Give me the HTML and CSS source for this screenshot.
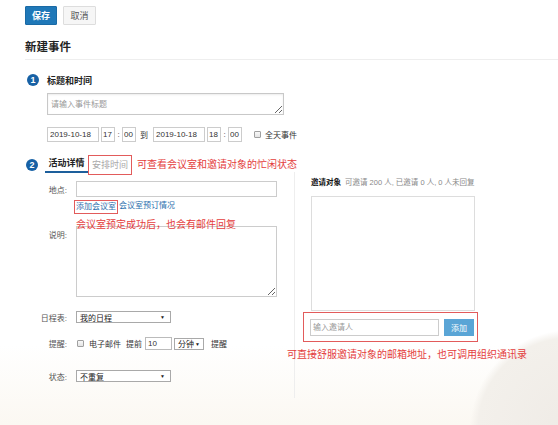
FILE: index.html
```html
<!DOCTYPE html>
<html lang="zh-CN">
<head>
<meta charset="utf-8">
<title>新建事件</title>
<link rel="stylesheet" href="styles.css">
</head>
<body>
<div class="page">
  <div class="toolbar">
    <button class="btn btn-primary">保存</button>
    <button class="btn btn-default">取消</button>
  </div>
  <h1 class="title">新建事件</h1>

  <section class="sec1">
    <div class="sec-head">
      <span class="num">1</span>
      <span class="sec-title">标题和时间</span>
    </div>
    <textarea class="title-input" placeholder="请输入事件标题"></textarea>
    <div class="time-row">
      <input class="inp date" value="2019-10-18">
      <input class="inp hm" value="17"><span class="colon">:</span><input class="inp hm" value="00">
      <span class="to">到</span>
      <input class="inp date" value="2019-10-18">
      <input class="inp hm" value="18"><span class="colon">:</span><input class="inp hm" value="00">
      <label class="allday"><input type="checkbox" class="chk"><span>全天事件</span></label>
    </div>
  </section>

  <section class="sec2">
    <div class="sec-head tabs">
      <span class="num">2</span>
      <span class="tab active">活动详情</span>
      <span class="tab idle">安排时间</span>
      <span class="note">可查看会议室和邀请对象的忙闲状态</span>
    </div>
    <div class="cols">
      <div class="left">
        <div class="field f-place">
          <label class="lbl">地点:</label>
          <input class="inp wide">
        </div>
        <div class="links">
          <a class="link marked">添加会议室</a><a class="link">会议室预订情况</a>
        </div>
        <div class="field f-desc">
          <label class="lbl">说明:</label>
          <div class="ta-wrap">
            <textarea class="desc"></textarea>
            <span class="note overlay">会议室预定成功后，也会有邮件回复</span>
          </div>
        </div>
        <div class="field f-cal">
          <label class="lbl">日程表:</label>
          <div class="select w95"><span>我的日程</span><span class="caret">▼</span></div>
        </div>
        <div class="field f-remind">
          <label class="lbl">提醒:</label>
          <input type="checkbox" class="chk">
          <span class="txt t-mail">电子邮件</span>
          <span class="txt t-pre">提前</span>
          <input class="inp mins" value="10">
          <div class="select unit"><span>分钟</span><span class="caret">▼</span></div>
          <span class="txt t-rem">提醒</span>
        </div>
        <div class="field f-status">
          <label class="lbl">状态:</label>
          <div class="select w95"><span>不重复</span><span class="caret">▼</span></div>
        </div>
      </div>
      <div class="right">
        <div class="inv-head"><b>邀请对象</b><span class="stats">可邀请 200 人, 已邀请 0 人, 0 人未回复</span></div>
        <div class="inv-list"></div>
        <div class="inv-add">
          <input class="inp inv-input" placeholder="输入邀请人">
          <button class="btn-add">添加</button>
        </div>
        <div class="note inv-note">可直接舒服邀请对象的邮箱地址，也可调用组织通讯录</div>
      </div>
    </div>
  </section>
</div>
</body>
</html>
```

FILE: styles.css
```css
* { box-sizing: border-box; }
html, body { margin: 0; height: 100%; }
body {
  font-family: "Liberation Sans", "Noto Sans CJK SC", sans-serif;
  font-size: 8px;
  color: #333;
  overflow: hidden;
  background:
    radial-gradient(circle at 570px 430px, #efebe6 0, #f3f0eb 92px, rgba(255,255,255,0) 100px),
    linear-gradient(#ffffff 0, #ffffff 345px, #fbf8f2 425px);
}
.page { padding: 6px 0 0 25px; height: 425px; }

.toolbar { display: flex; gap: 6px; height: 19px; }
.btn {
  font-family: inherit; font-size: 9px; height: 19px; padding: 0;
  border-radius: 1px;
}
.btn-primary { width: 32px; background: #1f78b8; color: #fff; border: 1px solid #1a6aa5; font-weight: bold; }
.btn-default { width: 33px; background: #f6f6f6; color: #555; border: 1px solid #ddd; }

.title {
  margin: 15px 0 0; font-size: 11.5px; line-height: 14px; font-weight: bold;
  padding-bottom: 5px; border-bottom: 1px solid #eee; color: #222;
}

.sec-head { display: flex; align-items: center; }
.num {
  width: 12px; height: 12px; border-radius: 50%; background: #1761a5; color: #fff;
  font-weight: bold; font-size: 9px; line-height: 12px; text-align: center; flex: none;
}
.sec1 .sec-head { margin-top: 14px; height: 12px; padding-left: 2px; }
.sec-title { margin-left: 8px; font-weight: bold; font-size: 9px; color: #222; }

.inp {
  font-family: inherit; font-size: 8px; color: #333; border: 1px solid #ccc;
  padding: 0 2px; margin: 0; background: #fff; outline: none;
}
.title-input {
  display: block; margin: 7px 0 0 22px; width: 237px; height: 22px;
  font-family: inherit; font-size: 8px; padding: 4px 3px; border: 1px solid #c8c8c8;
  box-shadow: inset 0 1px 2px rgba(0,0,0,.08);
}
.title-input::placeholder, .inv-input::placeholder { color: #999; }

.time-row { display: flex; align-items: center; margin: 12px 0 0 22px; height: 15px; }
.time-row .inp { height: 15px; }
.date { width: 52px; margin-right: 2px; }
.hm { width: 14px; padding: 0 1px; }
.colon { width: 7px; text-align: center; }
.to { margin: 0 5px 0 4px; }
.allday { display: flex; align-items: center; margin-left: 12px; }
.chk {
  -webkit-appearance: none; appearance: none;
  width: 7px; height: 7px; margin: 0; flex: none;
  border: 1px solid #a0a0a0; border-radius: 1px;
  background: linear-gradient(#f8f8f8, #e4e4e4);
}
.allday span { margin-left: 4px; }

.sec2 .sec-head { margin-top: 13px; height: 20px; align-items: flex-start; padding-left: 1px; }
.sec2 .num { margin-top: 4px; }
.tab { height: 20px; font-size: 9px; line-height: 16px; }
.tab.active {
  margin-left: 7px; width: 43px; height: 18px; text-align: center; font-weight: bold;
  color: #222; border-bottom: 2px solid #1d5f9c;
}
.tab.idle {
  width: 44px; text-align: center; color: #aaa; border: 1px solid #e25b5b; line-height: 18px;
}
.note { color: #e43d3d; font-size: 10px; white-space: nowrap; }
.tabs .note { margin-left: 5px; line-height: 20px; }

.cols { display: flex; }
.left { width: 269px; padding-bottom: 16px; }
.right { flex: 1; border-left: 1px solid #eee; padding-left: 16px; min-height: 223px; margin-top: -3px; padding-top: 6px; }

.field { display: flex; align-items: center; }
.lbl { width: 42px; text-align: right; margin-right: 9px; color: #555; flex: none; }
.f-place { margin-top: 6px; height: 16px; }
.wide { width: 201px; height: 16px; }

.links { margin-top: 3px; padding-left: 49px; display: flex; height: 14px; line-height: 12px; }
.link { color: #2c6fae; }
.link.marked { border: 1px solid #e25b5b; padding: 0 1px; margin-right: 1px; }

.f-desc { margin-top: 12px; align-items: flex-start; }
.f-desc .lbl { padding-top: 3px; }
.ta-wrap { position: relative; width: 201px; height: 71px; }
.desc {
  display: block; width: 201px; height: 71px; border: 1px solid #ccc; margin: 0;
  font-family: inherit; font-size: 8px;
}
.overlay { position: absolute; left: 0; top: -7px; line-height: 12px; }

.select {
  display: flex; justify-content: space-between; align-items: center;
  height: 12px; border: 1px solid #a9a9a9; background: #fff; padding: 0 5px 0 3px; color: #222;
}
.caret { font-size: 5px; color: #222; }
.w95 { width: 95px; }
.f-cal { margin-top: 14px; height: 12px; }

.f-remind { margin-top: 14px; height: 13px; }
.f-remind .chk { margin-left: 1px; }
.txt { color: #333; }
.t-mail { margin-left: 5px; }
.t-pre { margin-left: 5px; }
.mins { width: 27px; height: 13px; margin-left: 3px; border-color: #bbb; }
.unit { width: 30px; margin-left: 2px; padding: 0 3px; }
.t-rem { margin-left: 7px; }

.f-status { margin-top: 20px; height: 12px; }

.inv-head { line-height: 10px; font-size: 7.5px; }
.inv-head b { color: #111; }
.stats { color: #888; margin-left: 4px; }
.inv-list { margin-top: 8px; width: 164px; height: 115px; border: 1px solid #ddd; background: #fff; }
.inv-add {
  display: flex; gap: 5px; margin: 1px 0 0 -8px; width: 175px; height: 30px;
  border: 1px solid #e25b5b; padding: 6px 3px 0 6px;
}
.inv-input { width: 129px; height: 17px; }
.btn-add {
  width: 30px; height: 17px; border: none; background: #5aa5d6; color: #fff;
  font-family: inherit; font-size: 8px; padding: 0;
}
.inv-note { margin: 7px 0 0 -24px; line-height: 12px; }
```
